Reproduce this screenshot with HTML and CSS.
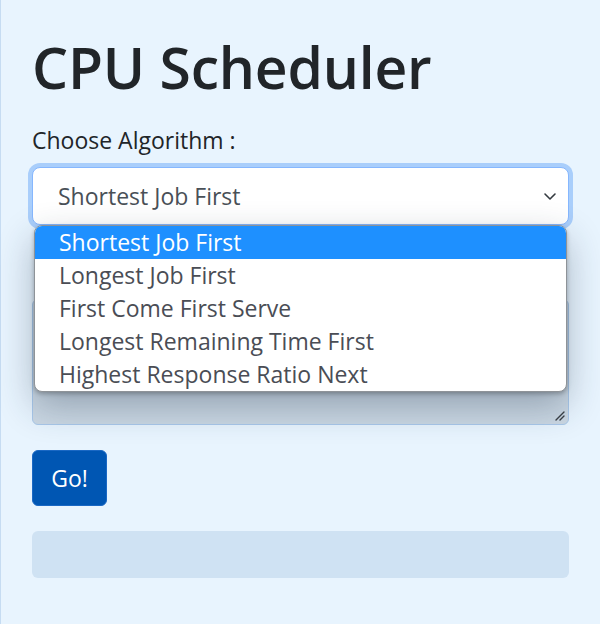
FILE: index.html
```html
<!DOCTYPE html>
<html lang="en">
<head>
<meta charset="utf-8">
<title>CPU Scheduler</title>
<link rel="stylesheet" href="styles.css">
</head>
<body>
<main class="page">
  <h1 class="title">CPU Scheduler</h1>
  <label class="label">Choose Algorithm :</label>
  <div class="select-wrap">
    <div class="select">
      <span class="select-value">Shortest Job First</span>
      <svg class="chevron" width="16" height="16" viewBox="0 0 16 16"><path d="M3 6l5 5 5-5" fill="none" stroke="#343a40" stroke-width="1.6" stroke-linecap="round" stroke-linejoin="round"/></svg>
    </div>
    <ul class="dropdown">
      <li class="option selected">Shortest Job First</li>
      <li class="option">Longest Job First</li>
      <li class="option">First Come First Serve</li>
      <li class="option">Longest Remaining Time First</li>
      <li class="option">Highest Response Ratio Next</li>
    </ul>
  </div>
  <div class="textarea">
    <svg class="grip" width="12" height="12" viewBox="0 0 12 12"><path d="M11 3L3 11M11 7L7 11" stroke="#3a3f45" stroke-width="1.4" stroke-linecap="round"/></svg>
  </div>
  <button class="btn">Go!</button>
  <div class="output"></div>
</main>
</body>
</html>
```
FILE: styles.css
```css
html, body {
  margin: 0;
  padding: 0;
  height: 100%;
}
body {
  background: #e8f4fe;
  font-family: "Open Sans", "Noto Sans", sans-serif;
  color: #212529;
}
.page {
  box-sizing: border-box;
  min-height: 100%;
  border-left: 1px solid #c6dcf2;
  padding: 1px 31px 0 31px;
  display: flex;
  flex-direction: column;
  align-items: flex-start;
}
.title {
  margin: 32px 0 0 0;
  font-size: 57px;
  font-weight: 600;
  line-height: 68px;
  letter-spacing: -0.2px;
}
.label {
  margin-top: 23px;
  font-size: 23px;
  line-height: 32px;
}
.select-wrap {
  position: relative;
  align-self: stretch;
  margin-top: 11px;
}
.select {
  box-sizing: border-box;
  height: 58px;
  background: #fff;
  border: 1px solid #86b7fe;
  border-radius: 8px;
  box-shadow: 0 0 0 4px #a9cefb;
  display: flex;
  align-items: center;
  justify-content: space-between;
  padding: 0 10px 0 25px;
  font-size: 23px;
  color: #495057;
}
.chevron {
  display: block;
}
.dropdown {
  position: absolute;
  left: 2px;
  right: 2px;
  top: 58px;
  margin: 0;
  padding: 0;
  list-style: none;
  background: #fff;
  border: 1px solid #8e9398;
  border-radius: 8px;
  overflow: hidden;
  box-shadow: 0 2px 4px rgba(0, 0, 0, 0.25), 0 14px 36px rgba(30, 50, 70, 0.32);
  z-index: 2;
}
.option {
  height: 33px;
  line-height: 33px;
  padding-left: 24px;
  font-size: 23px;
  color: #4a4d55;
}
.option.selected {
  background: #1e90ff;
  color: #fff;
}
.textarea {
  box-sizing: border-box;
  align-self: stretch;
  margin-top: 74px;
  height: 126px;
  border: 1px solid #a9c8ea;
  border-radius: 6px;
  background: #cbd8e4;
  display: flex;
  align-items: flex-end;
  justify-content: flex-end;
  padding: 0 3px 3px 0;
}
.grip {
  display: block;
}
.btn {
  margin-top: 25px;
  box-sizing: border-box;
  width: 75px;
  height: 56px;
  border: 1px solid #1a68c4;
  border-radius: 6px;
  background: #0056b3;
  color: #fff;
  font-family: inherit;
  font-size: 23px;
  padding: 0;
}
.output {
  align-self: stretch;
  margin-top: 25px;
  height: 47px;
  border-radius: 6px;
  background: #cfe2f3;
}
```
